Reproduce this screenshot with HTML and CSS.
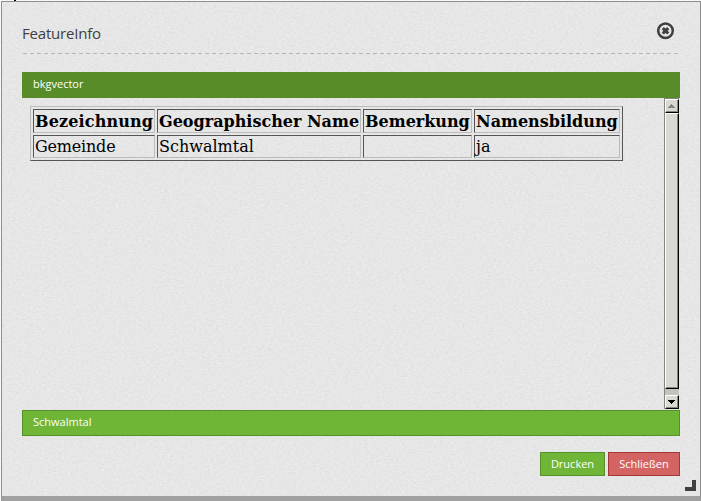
FILE: index.html
```html
<!DOCTYPE html>
<html lang="de">
<head>
<meta charset="utf-8">
<title>FeatureInfo</title>
<link rel="stylesheet" href="styles.css">
</head>
<body>
<div class="map-mark"></div>
<section class="popup">
  <svg class="texture" width="698" height="494" aria-hidden="true">
    <filter id="paper" x="0" y="0" width="100%" height="100%" color-interpolation-filters="sRGB">
      <feTurbulence type="fractalNoise" baseFrequency="0.35 0.6" numOctaves="3" seed="4" stitchTiles="stitch"/>
      <feColorMatrix type="matrix" values="0.05 0.05 0 0 0.852  0.05 0.05 0 0 0.852  0.05 0.05 0 0 0.852  0 0 0 0 1"/>
    </filter>
    <rect width="698" height="494" filter="url(#paper)"/>
  </svg>
  <div class="content">
    <header class="head">
      <h1 class="title">FeatureInfo</h1>
      <svg class="close" width="18" height="18" viewBox="0 0 18 18">
        <circle cx="8.5" cy="8.8" r="7.3" fill="none" stroke="#404040" stroke-width="2.5"/>
        <path d="M5.8 6.1l5.4 5.4M11.2 6.1l-5.4 5.4" stroke="#404040" stroke-width="3.1"/>
      </svg>
    </header>
    <svg class="rule" width="658" height="1"><path d="M1 .5H658" stroke="#b5b5b5" stroke-dasharray="4 3"/></svg>
    <div class="bar active">bkgvector</div>
    <div class="pane">
      <table class="info">
        <colgroup><col class="c1"><col class="c2"><col class="c3"><col class="c4"></colgroup>
        <tr><th class="wide">Bezeichnung</th><th>Geographischer Name</th><th>Bemerkung</th><th>Namensbildung</th></tr>
        <tr class="row"><td class="tight">Gemeinde</td><td>Schwalmtal</td><td></td><td>ja</td></tr>
      </table>
      <div class="scroll">
        <div class="sbtn"><svg width="7" height="4"><path d="M3 0h1v1h1v1h1v1h1v1H0V3h1V2h1V1h1z" fill="#85857f"/></svg></div>
        <div class="thumb"></div>
        <div class="track"></div>
        <div class="sbtn down"><svg width="7" height="4"><path d="M0 0h7v1H6v1H5v1H4v1H3V3H2V2H1V1H0z" fill="#000"/></svg></div>
      </div>
    </div>
    <div class="bar">Schwalmtal</div>
    <footer class="actions">
      <button class="btn print">Drucken</button>
      <button class="btn cancel">Schließen</button>
    </footer>
  </div>
  <div class="grip"></div>
</section>
</body>
</html>
```
FILE: styles.css
```css
* { box-sizing: border-box; }
body {
  margin: 0;
  width: 701px;
  height: 501px;
  overflow: hidden;
  background: #f8f8f8;
  font-family: "Open Sans", sans-serif;
}
.map-mark { width: 2px; height: 1px; margin-left: 14px; background: #000; }
.popup {
  position: relative;
  width: 700px;
  height: 500px;
  margin-left: 1px;
  border: 1px solid #8e8e8e;
  border-bottom: 5px solid #a0a0a0;
  background: #e6e6e6;
}
.texture { position: absolute; top: 0; left: 0; }
.content { position: relative; padding: 0 20px; }
.head {
  display: flex;
  justify-content: space-between;
  height: 51px;
  padding: 20px 5px 0 0;
}
.title {
  margin: 0;
  color: #404040;
  font-size: 15px;
  font-weight: 400;
  letter-spacing: -0.2px;
  line-height: 22px;
}
.close { display: block; }
.rule { display: block; margin-bottom: 18px; }
.bar {
  height: 26px;
  padding-left: 10px;
  border: 1px solid #569029;
  background: #6fb536;
  color: #fff;
  font-size: 11px;
  line-height: 21px;
}
.active { background: #578c29; border-color: #578c29; }
.pane {
  display: flex;
  justify-content: space-between;
  height: 312px;
  padding: 0 1px 1px 8px;
}
.info {
  width: 593px;
  height: 55px;
  margin-top: 8px;
  table-layout: fixed;
  border: 1px solid;
  border-color: #bcbcbc #555 #555 #bcbcbc;
  border-spacing: 2px;
  color: #000;
  font: 16px/19px "DejaVu Serif", serif;
}
.info th, .info td {
  height: 24px;
  padding: 1px;
  border: 1px solid;
  border-color: #555 #bcbcbc #bcbcbc #555;
  text-align: left;
  white-space: nowrap;
}
.info .row td { height: 23px; }
.info .wide { letter-spacing: 0.15px; }
.info .tight { letter-spacing: -0.2px; }
.c1 { width: 122px; }
.c2 { width: 204px; }
.c3 { width: 109px; }
.c4 { width: 146px; }
.scroll {
  display: flex;
  flex-direction: column;
  width: 15px;
  height: 311px;
  border-left: 1px solid #85857f;
  border-top: 1px solid #85857f;
}
.sbtn, .thumb {
  border: 1px solid;
  border-color: #fff #000 #000 #fff;
  background: #d9d8d3;
  box-shadow: inset -1px -1px #85857f;
}
.sbtn {
  display: flex;
  align-items: center;
  justify-content: center;
  height: 14px;
  padding-right: 1px;
}
.thumb { height: 276px; }
.track { flex: 1; background: #c3c2be; }
.actions {
  display: flex;
  justify-content: flex-end;
  gap: 3px;
  margin-top: 16px;
}
.btn {
  height: 24px;
  padding: 0;
  border: 1px solid #569029;
  background: #6fb536;
  color: #fff;
  font: 11px/20px "Open Sans", sans-serif;
}
.print { width: 65px; }
.cancel { width: 72px; border-color: #a53637; background: #d36463; }
.grip {
  position: absolute;
  right: 4px;
  bottom: 5px;
  width: 11px;
  height: 11px;
  border: solid #404040;
  border-width: 0 4px 4px 0;
}
```
